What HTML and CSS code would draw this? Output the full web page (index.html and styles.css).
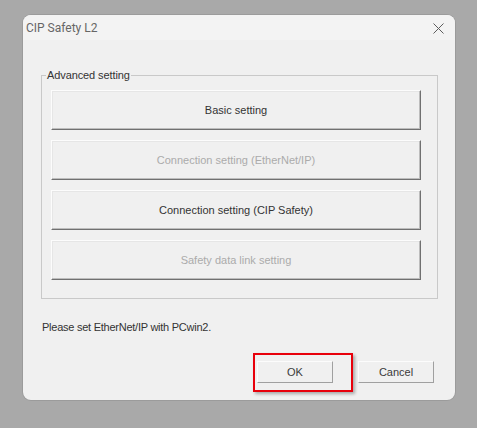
FILE: index.html
```html
<!DOCTYPE html>
<html>
<head>
<meta charset="utf-8">
<link rel="stylesheet" href="styles.css">
</head>
<body>
<div class="dialog">
  <div class="titlebar">
    <span class="title">CIP Safety L2</span>
    <svg class="close" width="11" height="11" viewBox="0 0 11 11"><path d="M0.5 0.5 L10.5 10.5 M10.5 0.5 L0.5 10.5" stroke="#5c5c5c" stroke-width="1" fill="none"/></svg>
  </div>
  <div class="content">
    <div class="group">
      <span class="legend">Advanced setting</span>
      <button class="big">Basic setting</button>
      <button class="big disabled">Connection setting (EtherNet/IP)</button>
      <button class="big">Connection setting (CIP Safety)</button>
      <button class="big disabled">Safety data link setting</button>
    </div>
    <p class="msg">Please set EtherNet/IP with PCwin2.</p>
    <div class="actions">
      <div class="ok-wrap">
        <button class="small">OK</button>
        <span class="highlight"></span>
      </div>
      <button class="small">Cancel</button>
    </div>
  </div>
</div>
</body>
</html>
```

FILE: styles.css
```css
html, body {
  margin: 0;
  padding: 0;
}
body {
  background: #a9a9a9;
  width: 477px;
  height: 428px;
  overflow: hidden;
  padding: 15px 0 0 23px;
  box-sizing: border-box;
  font-family: "Liberation Sans", Arial, sans-serif;
}
.dialog {
  width: 432px;
  height: 385px;
  background: #f0f0f0;
  border-radius: 8px;
  overflow: hidden;
  display: flex;
  flex-direction: column;
  box-shadow: 0 0 0 1px rgba(0,0,0,0.08);
}
.titlebar {
  height: 25px;
  flex: 0 0 25px;
  background: #f3f3f3;
  display: flex;
  align-items: center;
  justify-content: space-between;
  padding: 0 11px 0 3px;
}
.title {
  font-family: Roboto, "Liberation Sans", sans-serif;
  font-size: 12px;
  color: #666666;
  line-height: 14px;
  padding-top: 1px;
}
.close {
  display: block;
  margin-top: 1px;
}
.content {
  flex: 1;
  padding: 35px 0 0 18px;
}
.group {
  position: relative;
  width: 397px;
  box-sizing: border-box;
  border: 1px solid #c9c9c9;
  padding: 14px 16px 18px 9px;
  display: flex;
  flex-direction: column;
  gap: 10px;
}
.legend {
  position: absolute;
  top: -7px;
  left: 4px;
  padding: 0 1px;
  background: #f0f0f0;
  font-size: 11px;
  line-height: 13px;
  color: #333333;
  letter-spacing: -0.1px;
}
button {
  font-family: "Liberation Sans", Arial, sans-serif;
  font-size: 11px;
  color: #333333;
  background: #f0f0f0;
  margin: 0;
  padding: 0;
  border-style: solid;
  border-width: 1px;
  border-color: #fcfcfc #707070 #707070 #fcfcfc;
  box-shadow: inset -1px -1px 0 #bdbdbd, inset 1px 1px 0 #e6e6e6;
  border-radius: 0;
}
.big {
  height: 40px;
  width: 100%;
}
.big.disabled {
  color: #ababab;
}
.msg {
  margin: 22px 0 0 1px;
  font-size: 11px;
  line-height: 13px;
  color: #333333;
  letter-spacing: -0.25px;
}
.actions {
  margin: 27px 21px 0 0;
  display: flex;
  justify-content: flex-end;
  gap: 25px;
}
.ok-wrap {
  position: relative;
  display: flex;
}
.small {
  width: 76px;
  height: 22px;
  color: #3a3a3a;
  border-color: #fcfcfc #a0a0a0 #a0a0a0 #fcfcfc;
  box-shadow: none;
}
.highlight {
  position: absolute;
  left: -4px;
  top: -8px;
  width: 100px;
  height: 39px;
  box-sizing: border-box;
  border: 2px solid #e8000b;
  box-shadow: 2px 2px 3px rgba(0,0,0,0.3);
  pointer-events: none;
}
```
